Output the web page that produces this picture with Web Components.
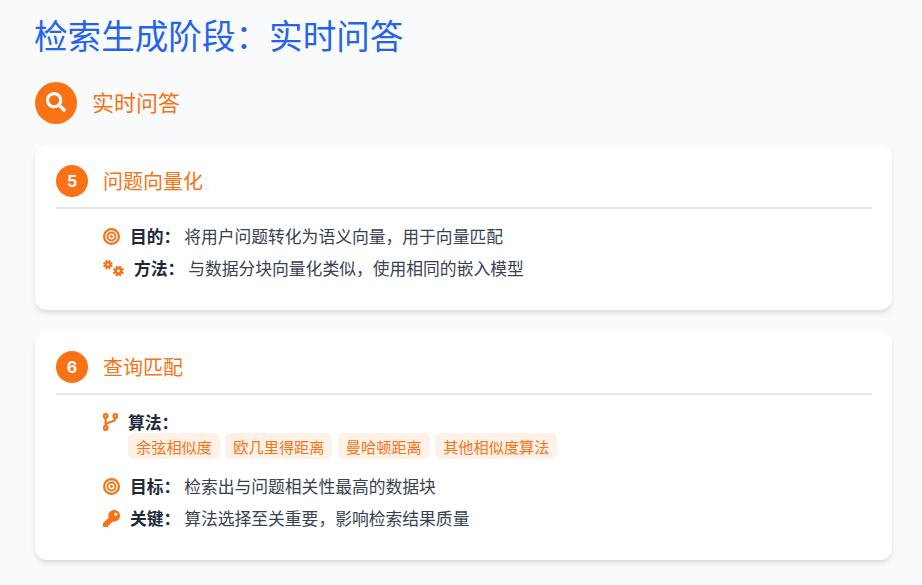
<!DOCTYPE html>
<html lang="zh">
<head>
<meta charset="utf-8">
<title>检索生成阶段</title>
<style>
   html, body { margin: 0; height: 100%; }
   body {
      background: #f8fafc;
      font-family: "Noto Sans CJK SC", "Noto Sans", sans-serif;
      overflow: hidden;
   }
</style>
</head>
<body>

<template id="slide-page">
   <style>
      :host { display: flex; flex-direction: column; padding: 12px 30px 0 35px; }
      h1 {
         margin: 0 0 24px -1px;
         font-size: 33.6px;
         line-height: 46px;
         font-weight: 400;
         color: #2563eb;
      }
      ::slotted(step-card) { margin-bottom: 21px; }
   </style>
   <h1></h1>
   <slot></slot>
</template>

<template id="section-head">
   <style>
      :host { display: flex; align-items: center; gap: 15px; margin-bottom: 21px; }
      .circle {
         width: 42px;
         height: 42px;
         border-radius: 50%;
         background: #f97316;
         color: white;
         display: flex;
         align-items: center;
         justify-content: center;
         padding-bottom: 2px;
         box-sizing: border-box;
      }
      .text { font-size: 22px; line-height: 38px; padding-bottom: 4px; color: #f97316; }
   </style>
   <div class="circle"><slot name="icon"></slot></div>
   <div class="text"><slot></slot></div>
</template>

<template id="step-card">
   <style>
      :host {
         display: block;
         background: white;
         border-radius: 12px;
         padding: 20px 20px 26px 21px;
         box-shadow: 0 4px 6px -1px rgba(0, 0, 0, 0.1), 0 2px 4px -1px rgba(0, 0, 0, 0.06);
      }
      header {
         display: flex;
         align-items: center;
         gap: 15px;
         padding-bottom: 10px;
         border-bottom: 2px solid #e5e7eb;
         margin-bottom: 11px;
      }
      .num {
         width: 32px;
         height: 32px;
         border-radius: 50%;
         background: #f97316;
         color: white;
         font: 700 16px Inter, "Liberation Sans", sans-serif;
         display: flex;
         align-items: center;
         justify-content: center;
      }
      .title { font-size: 20px; line-height: 32px; color: #f97316; }
      .body { padding-left: 47px; }
   </style>
   <header>
      <div class="num"></div>
      <div class="title"></div>
   </header>
   <div class="body"><slot></slot></div>
</template>

<template id="info-row">
   <style>
      :host { display: flex; align-items: flex-start; font-size: 16.8px; line-height: 24px; padding: 4px 0; color: #374151; }
      .icon { display: flex; align-items: center; height: 24px; margin-right: 10px; }
      b { font-weight: 700; color: #1e293b; }
   </style>
   <div class="icon"><slot name="icon"></slot></div>
   <div><b></b> <slot></slot></div>
</template>

<template id="tag-list">
   <style>
      :host { display: block; margin: -1px 0 7px 0; }
   </style>
   <slot></slot>
</template>

<template id="tag-chip">
   <style>
      :host {
         display: inline-block;
         background: rgba(249, 115, 22, 0.1);
         color: #f97316;
         border-radius: 6px;
         font-size: 15.2px;
         line-height: 20px;
         padding: 3px 8px;
         margin-right: 5.4px;
      }
   </style>
   <slot></slot>
</template>

<template id="fa-icon">
   <style>
      :host { display: block; line-height: 0; }
      svg { display: block; fill: currentColor; }
   </style>
</template>

<slide-page heading="检索生成阶段：实时问答">
   <section-head>
      <fa-icon slot="icon" name="search" size="20" style="color:white"></fa-icon>
      实时问答
   </section-head>

   <step-card num="5" heading="问题向量化">
      <info-row label="目的：">
         <fa-icon slot="icon" name="bullseye" size="17"></fa-icon>
         将用户问题转化为语义向量，用于向量匹配
      </info-row>
      <info-row label="方法：">
         <fa-icon slot="icon" name="cogs" size="21"></fa-icon>
         与数据分块向量化类似，使用相同的嵌入模型
      </info-row>
   </step-card>

   <step-card num="6" heading="查询匹配">
      <info-row label="算法：">
         <fa-icon slot="icon" name="branch" size="15"></fa-icon>
         <tag-list>
            <tag-chip>余弦相似度</tag-chip><tag-chip>欧几里得距离</tag-chip><tag-chip>曼哈顿距离</tag-chip><tag-chip>其他相似度算法</tag-chip>
         </tag-list>
      </info-row>
      <info-row label="目标：">
         <fa-icon slot="icon" name="bullseye" size="17"></fa-icon>
         检索出与问题相关性最高的数据块
      </info-row>
      <info-row label="关键：">
         <fa-icon slot="icon" name="key" size="17"></fa-icon>
         算法选择至关重要，影响检索结果质量
      </info-row>
   </step-card>
</slide-page>

<script>
   const ORANGE = '#f97316'

   // Eight toothed gear with a round hole, as one path for the evenodd rule
   function gear(cx, cy, outer, inner, hole) {
      let d = ''
      for (let i = 0; i < 8; i++) {
         const a = i * Math.PI / 4 + Math.PI / 8
         const pts = [[inner, -0.28], [outer, -0.2], [outer, 0.2], [inner, 0.28]]
         pts.forEach(([r, off]) => {
            const x = cx + r * Math.cos(a + off)
            const y = cy + r * Math.sin(a + off)
            d += (d ? 'L' : 'M') + x.toFixed(2) + ' ' + y.toFixed(2)
         })
      }
      d += `ZM${cx + hole} ${cy}a${hole} ${hole} 0 1 0 ${-2 * hole} 0a${hole} ${hole} 0 1 0 ${2 * hole} 0Z`
      return `<path fill="${ORANGE}" fill-rule="evenodd" d="${d}"/>`
   }

   const ICONS = {
      search: {
         box: '0 0 512 512',
         ratio: 1,
         svg: '<path d="M505 442.7L405.3 343c-4.5-4.5-10.6-7-17-7H372c27.6-35.3 44-79.7 44-128C416 93.1 322.9 0 208 0S0 93.1 0 208s93.1 208 208 208c48.3 0 92.7-16.4 128-44v16.3c0 6.4 2.5 12.5 7 17l99.7 99.7c9.4 9.4 24.6 9.4 33.9 0l28.3-28.3c9.4-9.4 9.4-24.6.1-34zM208 336c-70.7 0-128-57.2-128-128 0-70.7 57.2-128 128-128 70.7 0 128 57.2 128 128 0 70.7-57.2 128-128 128z"/>'
      },
      key: {
         box: '0 0 512 512',
         ratio: 1,
         svg: `<path fill="${ORANGE}" d="M512 176C512 273.2 433.2 352 336 352c-11.2 0-22.2-1.1-32.8-3.1l-24 27A24 24 0 0 1 261.2 384H224v40c0 13.3-10.7 24-24 24h-40v40c0 13.3-10.7 24-24 24H24c-13.3 0-24-10.7-24-24v-78.1c0-6.4 2.5-12.5 7-17l161.8-161.8C163.1 213.8 160 195.3 160 176 160 78.8 238.8 0 336 0 433.5 0 512 78.5 512 176zM336 128c0 26.5 21.5 48 48 48s48-21.500 48-48-21.500-48-48-48-48 21.500-48 48z"/>`
      },
      bullseye: {
         box: '0 0 24 24',
         ratio: 1,
         svg: `<circle cx="12" cy="12" r="10.4" fill="none" stroke="${ORANGE}" stroke-width="3.2"/>` +
            `<circle cx="12" cy="12" r="5.6" fill="none" stroke="${ORANGE}" stroke-width="2.6"/>` +
            `<circle cx="12" cy="12" r="2" fill="${ORANGE}"/>`
      },
      cogs: {
         box: '0 0 30 24',
         ratio: 0.8,
         svg: gear(7, 6.6, 7, 5, 1.7) + gear(22, 15.8, 8, 5.8, 2.1)
      },
      branch: {
         box: '0 0 20 24',
         ratio: 1.2,
         svg: `<g fill="none" stroke="${ORANGE}" stroke-width="3">` +
            '<circle cx="3.500" cy="4" r="2.500"/><circle cx="16.500" cy="4" r="2.500"/><circle cx="3.500" cy="20" r="2.500"/>' +
            '<path d="M3.500 6.500V17.500M16.500 6.500C16.500 14 3.500 10 3.500 17.500"/></g>'
      }
   }

   class SlidePage extends HTMLElement {
      constructor() {
         super()
         let shadow = this.attachShadow({ mode: 'open' })
         shadow.appendChild(document.querySelector('#slide-page').content.cloneNode(true))
         shadow.querySelector('h1').textContent = this.getAttribute('heading')
      }
   }

   class SectionHead extends HTMLElement {
      constructor() {
         super()
         this.attachShadow({ mode: 'open' }).appendChild(document.querySelector('#section-head').content.cloneNode(true))
      }
   }

   class StepCard extends HTMLElement {
      constructor() {
         super()
         let shadow = this.attachShadow({ mode: 'open' })
         shadow.appendChild(document.querySelector('#step-card').content.cloneNode(true))
         shadow.querySelector('.num').textContent = this.getAttribute('num')
         shadow.querySelector('.title').textContent = this.getAttribute('heading')
      }
   }

   class InfoRow extends HTMLElement {
      constructor() {
         super()
         let shadow = this.attachShadow({ mode: 'open' })
         shadow.appendChild(document.querySelector('#info-row').content.cloneNode(true))
         shadow.querySelector('b').textContent = this.getAttribute('label')
      }
   }

   class TagList extends HTMLElement {
      constructor() {
         super()
         this.attachShadow({ mode: 'open' }).appendChild(document.querySelector('#tag-list').content.cloneNode(true))
      }
   }

   class TagChip extends HTMLElement {
      constructor() {
         super()
         this.attachShadow({ mode: 'open' }).appendChild(document.querySelector('#tag-chip').content.cloneNode(true))
      }
   }

   class FaIcon extends HTMLElement {
      constructor() {
         super()
         let shadow = this.attachShadow({ mode: 'open' })
         shadow.appendChild(document.querySelector('#fa-icon').content.cloneNode(true))
         const icon = ICONS[this.getAttribute('name')]
         const width = Number(this.getAttribute('size'))
         const wrap = document.createElement('div')
         wrap.innerHTML = `<svg viewBox="${icon.box}" width="${width}" height="${width * icon.ratio}">${icon.svg}</svg>`
         shadow.appendChild(wrap.firstChild)
      }
   }

   customElements.define('slide-page', SlidePage)
   customElements.define('section-head', SectionHead)
   customElements.define('step-card', StepCard)
   customElements.define('info-row', InfoRow)
   customElements.define('tag-list', TagList)
   customElements.define('tag-chip', TagChip)
   customElements.define('fa-icon', FaIcon)
</script>
</body>
</html>
